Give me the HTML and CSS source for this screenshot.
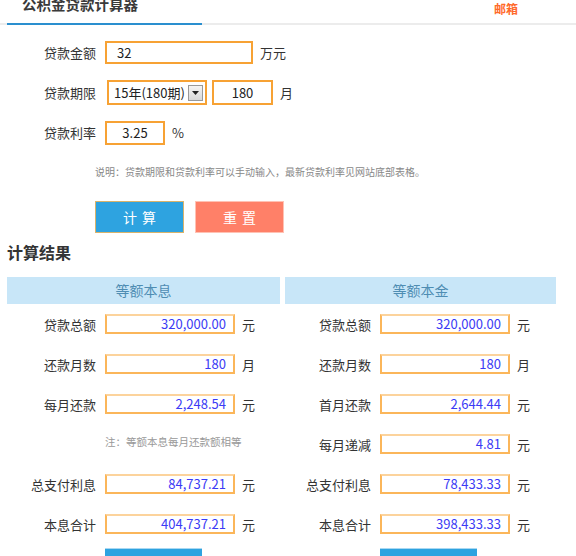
FILE: index.html
```html
<!DOCTYPE html>
<html lang="zh-CN">
<head>
<meta charset="utf-8">
<title>公积金贷款计算器</title>
<link rel="stylesheet" href="styles.css">
</head>
<body>
<div class="page">
  <header class="top">
    <div class="tab"><h1 class="title">公积金贷款计算器</h1></div>
    <a class="mail">邮箱</a>
  </header>

  <section class="form">
    <div class="row">
      <span class="lbl">贷款金额</span>
      <div class="box box-amount">32</div>
      <span class="unit">万元</span>
    </div>
    <div class="row">
      <span class="lbl">贷款期限</span>
      <div class="box box-select">
        <span class="sel-text">15年(180期)</span>
        <span class="sel-btn"><svg width="7" height="4" viewBox="0 0 7 4"><path d="M0 0h7L3.5 4z" fill="#222"/></svg></span>
      </div>
      <div class="box box-months">180</div>
      <span class="unit">月</span>
    </div>
    <div class="row">
      <span class="lbl">贷款利率</span>
      <div class="box box-rate">3.25</div>
      <span class="unit">%</span>
    </div>
    <p class="tip">说明：贷款期限和贷款利率可以手动输入，最新贷款利率见网站底部表格。</p>
    <div class="actions">
      <button class="btn btn-calc">计算</button>
      <button class="btn btn-reset">重置</button>
    </div>
  </section>

  <h2 class="result-title">计算结果</h2>

  <section class="results">
    <div class="col col-left">
      <div class="col-head">等额本息</div>
      <div class="rrow"><span class="rlbl">贷款总额</span><div class="val">320,000.00</div><span class="unit">元</span></div>
      <div class="rrow"><span class="rlbl">还款月数</span><div class="val">180</div><span class="unit">月</span></div>
      <div class="rrow"><span class="rlbl">每月还款</span><div class="val">2,248.54</div><span class="unit">元</span></div>
      <div class="rrow"><span class="rlbl"></span><span class="rnote">注：等额本息每月还款额相等</span></div>
      <div class="rrow"><span class="rlbl">总支付利息</span><div class="val">84,737.21</div><span class="unit">元</span></div>
      <div class="rrow"><span class="rlbl">本息合计</span><div class="val">404,737.21</div><span class="unit">元</span></div>
      <div class="rrow rrow-btn"><span class="rlbl"></span><button class="btn btn-detail"></button></div>
    </div>
    <div class="col col-right">
      <div class="col-head">等额本金</div>
      <div class="rrow"><span class="rlbl">贷款总额</span><div class="val">320,000.00</div><span class="unit">元</span></div>
      <div class="rrow"><span class="rlbl">还款月数</span><div class="val">180</div><span class="unit">月</span></div>
      <div class="rrow"><span class="rlbl">首月还款</span><div class="val">2,644.44</div><span class="unit">元</span></div>
      <div class="rrow"><span class="rlbl">每月递减</span><div class="val">4.81</div><span class="unit">元</span></div>
      <div class="rrow"><span class="rlbl">总支付利息</span><div class="val">78,433.33</div><span class="unit">元</span></div>
      <div class="rrow"><span class="rlbl">本息合计</span><div class="val">398,433.33</div><span class="unit">元</span></div>
      <div class="rrow rrow-btn"><span class="rlbl"></span><button class="btn btn-detail"></button></div>
    </div>
  </section>
</div>
</body>
</html>
```

FILE: styles.css
```css
* { box-sizing: border-box; }
html, body { margin: 0; padding: 0; background: #fff; }
body {
  font-family: "Noto Sans CJK SC", "Noto Sans", sans-serif;
  font-size: 13px;
  color: #333;
  overflow: hidden;
}
.page { width: 576px; }

.top {
  display: flex;
  justify-content: space-between;
  align-items: flex-start;
  height: 25px;
  border-bottom: 2px solid #ececec;
}
.tab {
  margin-left: 7px;
  width: 195px;
  height: 25px;
  padding-left: 15px;
  border-bottom: 2px solid #2a8fcf;
}
.title {
  margin: -6px 0 0;
  font-size: 14.5px;
  line-height: 20px;
  font-weight: bold;
  color: #3a3a3a;
}
.mail {
  margin-right: 58px;
  font-size: 12px;
  line-height: 18px;
  font-weight: bold;
  color: #ff6a2b;
}

.form { padding: 15px 0 0 7px; }
.row {
  display: flex;
  align-items: center;
  height: 25px;
  margin-bottom: 15px;
}
.row:nth-child(3) { margin-bottom: 0; }
.lbl {
  width: 89px;
  margin-right: 9px;
  text-align: right;
  color: #333;
}
.box {
  height: 24px;
  border: 2px solid #f7a234;
  background: #fff;
  line-height: 20px;
  color: #222;
  font-size: 13px;
}
.box-amount { width: 148px; height: 23px; padding-left: 10px; line-height: 19px; }
.box-select {
  width: 100px;
  height: 25px;
  margin-left: 2px;
  display: flex;
  align-items: center;
  padding-left: 5px;
  gap: 3px;
}
.sel-text { line-height: 20px; }
.sel-btn {
  width: 15px;
  height: 16px;
  border: 1px solid #999;
  background: linear-gradient(#f4f4f4, #d8d8d8);
  display: flex;
  align-items: center;
  justify-content: center;
}
.box-months {
  width: 61px;
  height: 25px;
  margin-left: 5px;
  text-align: center;
  line-height: 21px;
}
.box-rate { width: 60px; text-align: center; }
.unit { margin-left: 7px; color: #333; }

.tip {
  margin: 20px 0 0 88px;
  font-size: 10px;
  line-height: 14px;
  color: #888;
}
.actions {
  display: flex;
  gap: 11px;
  margin: 22px 0 0 88px;
}
.btn {
  width: 89px;
  height: 32px;
  font-family: inherit;
  font-size: 14px;
  letter-spacing: 5px;
  padding: 0 0 0 5px;
  color: #fff;
  cursor: pointer;
}
.btn-calc { background: #2ea3e0; border: 1px solid #d9b36b; }
.btn-reset { background: #ff8068; border: 1px solid #ffc2b4; }

.result-title {
  margin: 9px 0 0 7px;
  font-size: 16px;
  line-height: 20px;
  font-weight: bold;
  color: #333;
}

.results {
  display: grid;
  grid-template-columns: 273px 271px;
  column-gap: 5px;
  margin: 15px 0 0 7px;
}
.col-head {
  height: 27px;
  background: #c8e6f8;
  color: #4f8db3;
  font-size: 14px;
  line-height: 27px;
  text-align: center;
  margin-bottom: 10px;
}
.rrow {
  display: flex;
  align-items: center;
  height: 20px;
  margin-bottom: 20px;
}
.rlbl {
  width: 89px;
  margin-right: 9px;
  text-align: right;
  color: #333;
  flex: none;
}
.col-right .rlbl { width: 86px; }
.val {
  width: 130px;
  height: 20px;
  border: 2px solid #fbb65a;
  border-top-color: #fcd39c;
  padding-right: 7px;
  text-align: right;
  line-height: 16px;
  color: #3b3bf5;
}
.rnote {
  font-size: 10.5px;
  color: #999;
  line-height: 14px;
  margin-top: -4px;
}
.rrow-btn {
  height: auto;
  align-items: flex-start;
  margin-top: -6px;
}
.btn-detail {
  width: 97px;
  height: 32px;
  background: #2ea3e0;
  border: none;
  border-top: 1px solid #a9d8f2;
  flex: none;
}
```
